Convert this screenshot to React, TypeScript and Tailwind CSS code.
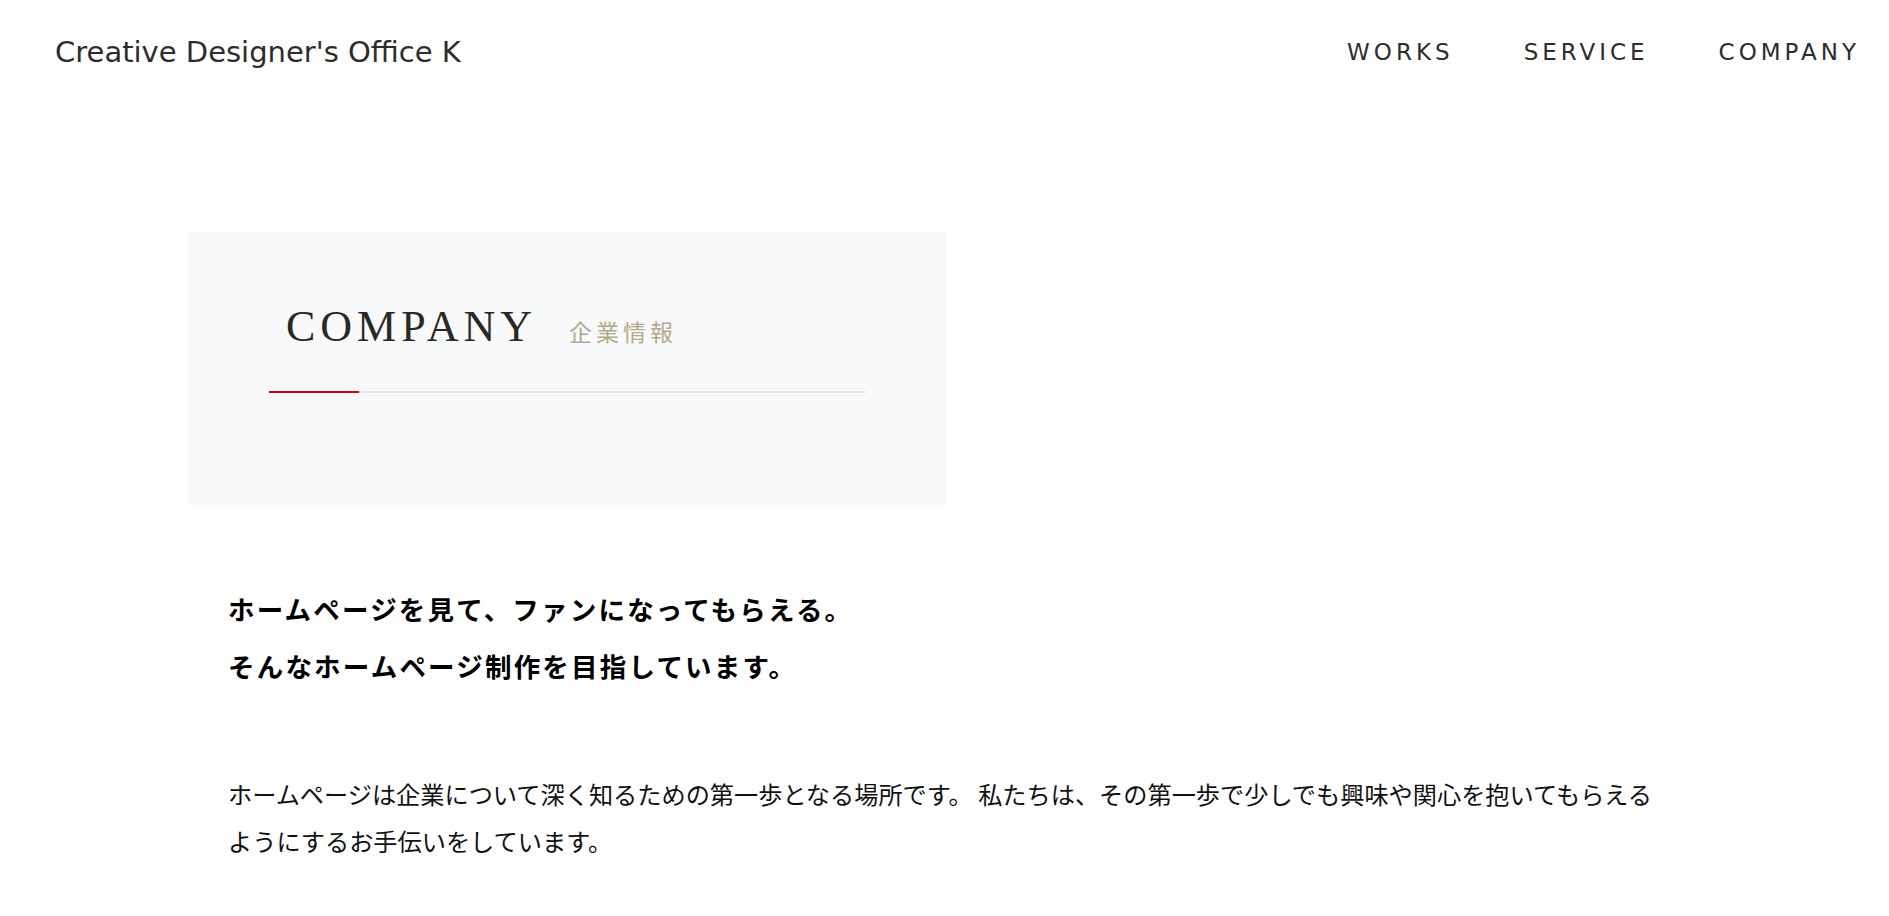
import React from 'react';

const navItems = ['WORKS', 'SERVICE', 'COMPANY'];

function Header() {
  return (
    <header className="h-[105px] flex items-center justify-between pl-[55px] pr-[29px]">
      {/* Logo */}
      <div className="text-[29px] leading-none text-[#2d2d2d] font-['DejaVu_Sans',sans-serif]">
        Creative Designer's Office K
      </div>

      {/* Global nav */}
      <nav className="flex items-center gap-[70px]">
        {navItems.map((item) => (
          <a
            key={item}
            href="#"
            className="text-[23px] leading-none tracking-[4px] text-[#2d2d2d] font-['DejaVu_Sans',sans-serif]"
          >
            {item}
          </a>
        ))}
      </nav>
    </header>
  );
}

function PageTitle() {
  return (
    <div className="w-[759px] bg-[#f8f9fa] px-[81px] pt-[73px] pb-[112px]">
      <div className="flex items-baseline pl-[17px]">
        <h1 className="text-[44px] leading-none tracking-[5px] text-[#2a2825] font-['Liberation_Serif',serif]">
          COMPANY
        </h1>
        <span className="ml-[32px] text-[23px] leading-none tracking-[4px] text-[#b3a98d] font-['Noto_Sans_CJK_JP',sans-serif]">
          企業情報
        </span>
      </div>
      {/* underline */}
      <div className="mt-[42px] h-[2px] bg-[#e9e9eb]">
        <div className="h-[2px] w-[90px] bg-[#d7000f]" />
      </div>
    </div>
  );
}

export default function App() {
  return (
    <div className="min-h-screen bg-white">
      <Header />

      <main className="px-[188px] pt-[127px] pb-[60px]">
        <PageTitle />

        <div className="pl-[40px] font-['Noto_Sans_CJK_JP',sans-serif]">
          <h2 className="mt-[75px] text-[26.5px] leading-[57px] tracking-[2.2px] font-bold text-black">
            ホームページを見て、ファンになってもらえる。
            <br />
            そんなホームページ制作を目指しています。
          </h2>

          <p className="mt-[76px] max-w-[1440px] text-[24.2px] leading-[47px] text-[#111]">
            ホームページは企業について深く知るための第一歩となる場所です。 私たちは、その第一歩で少しでも興味や関心を抱いてもらえるようにするお手伝いをしています。
          </p>
        </div>
      </main>
    </div>
  );
}
